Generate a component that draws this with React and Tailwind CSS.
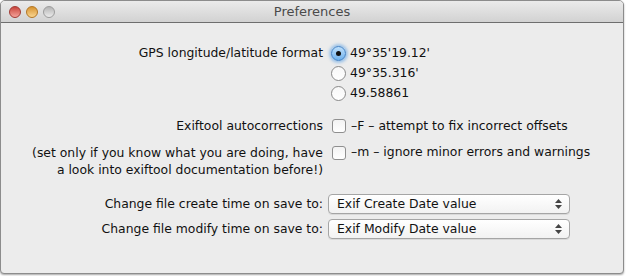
import React, { useState } from 'react';

const font = { fontFamily: '"DejaVu Sans", "Liberation Sans", sans-serif' };

const Light = ({ cls }) => (
  <span className={`w-[12px] h-[12px] rounded-full border ${cls}`} />
);

const Radio = ({ checked }) =>
  checked ? (
    <span className="w-[15px] h-[15px] rounded-full border border-[#3d7fc6] bg-gradient-to-b from-[#bfe0fb] to-[#6fb1ec] shadow-[0_0_3px_2px_rgba(90,160,230,0.55)] flex items-center justify-center">
      <span className="w-[5px] h-[5px] rounded-full bg-[#111]" />
    </span>
  ) : (
    <span className="w-[15px] h-[15px] rounded-full border border-[#8a8a8a] bg-gradient-to-b from-[#f7f7f7] to-[#ffffff]" />
  );

const Checkbox = () => (
  <span className="w-[14px] h-[14px] rounded-[3px] border border-[#8f8f8f] bg-gradient-to-b from-[#f3f3f3] to-[#ffffff]" />
);

const Select = ({ value }) => (
  <div className="w-[242px] h-[20px] rounded-[4px] border border-[#a5a5a5] bg-gradient-to-b from-[#ffffff] to-[#f2f2f2] shadow-[0_1px_0_rgba(0,0,0,0.08)] flex items-center pl-[8px] pr-[7px]">
    <span className="flex-1 text-[#111]">{value}</span>
    <span className="flex flex-col items-center gap-[2px]">
      <svg width="7" height="4" viewBox="0 0 7 4"><path d="M3.5 0L7 4H0z" fill="#444" /></svg>
      <svg width="7" height="4" viewBox="0 0 7 4"><path d="M0 0h7L3.5 4z" fill="#444" /></svg>
    </span>
  </div>
);

export default function App() {
  const [fmt] = useState(0);
  const formats = ["49°35'19.12'", "49°35.316'", '49.58861'];

  return (
    <div className="w-[626px] h-[276px] bg-white" style={font}>
      <div className="w-[624px] h-[274px] flex flex-col border border-[#8c8c8c] rounded-b-[4px] rounded-t-[5px] bg-[#ececec] overflow-hidden shadow-[0_1px_2px_rgba(0,0,0,0.35)]">
        <div className="h-[22px] flex items-center relative bg-gradient-to-b from-[#ebebeb] to-[#d2d2d2] border-b border-[#6e6e6e]">
          <div className="flex items-center gap-[5px] pl-[8px]">
            <Light cls="bg-gradient-to-b from-[#c8433c] to-[#f3a29a] border-[#a23a33]" />
            <Light cls="bg-gradient-to-b from-[#d7942a] to-[#f9d58e] border-[#b37624]" />
            <Light cls="bg-gradient-to-b from-[#b4b4b4] to-[#ececec] border-[#9c9c9c]" />
          </div>
          <span className="absolute left-0 right-0 text-center text-[13px] text-[#4a4a4a] pointer-events-none">Preferences</span>
        </div>

        <div className="flex flex-col text-[12.4px] text-[#111] pt-[20px]">
          <div className="flex">
            <div className="w-[330px] text-right pr-[8px] leading-[20px]">GPS longitude/latitude format</div>
            <div className="flex flex-col">
              {formats.map((f, i) => (
                <div key={f} className="h-[20px] flex items-center gap-[4px]">
                  <Radio checked={i === fmt} />
                  <span>{f}</span>
                </div>
              ))}
            </div>
          </div>

          <div className="flex mt-[13px]">
            <div className="w-[330px] text-right pr-[8px] leading-[20px]">Exiftool autocorrections</div>
            <div className="h-[20px] flex items-center gap-[5px] pl-[1px]">
              <Checkbox />
              <span>–F – attempt to fix incorrect offsets</span>
            </div>
          </div>

          <div className="flex mt-[8px]">
            <div className="w-[330px] text-right pr-[8px] leading-[17px]">
              (set only if you know what you are doing, have
              <br />
              a look into exiftool documentation before!)
            </div>
            <div className="h-[17px] flex items-center gap-[5px] pl-[1px]">
              <Checkbox />
              <span>–m – ignore minor errors and warnings</span>
            </div>
          </div>

          <div className="flex flex-col gap-[5px] mt-[16px]">
            <div className="flex items-center">
              <div className="w-[327px] text-right pr-[5px]">Change file create time on save to:</div>
              <Select value="Exif Create Date value" />
            </div>
            <div className="flex items-center">
              <div className="w-[327px] text-right pr-[5px]">Change file modify time on save to:</div>
              <Select value="Exif Modify Date value" />
            </div>
          </div>
        </div>
      </div>
    </div>
  );
}
